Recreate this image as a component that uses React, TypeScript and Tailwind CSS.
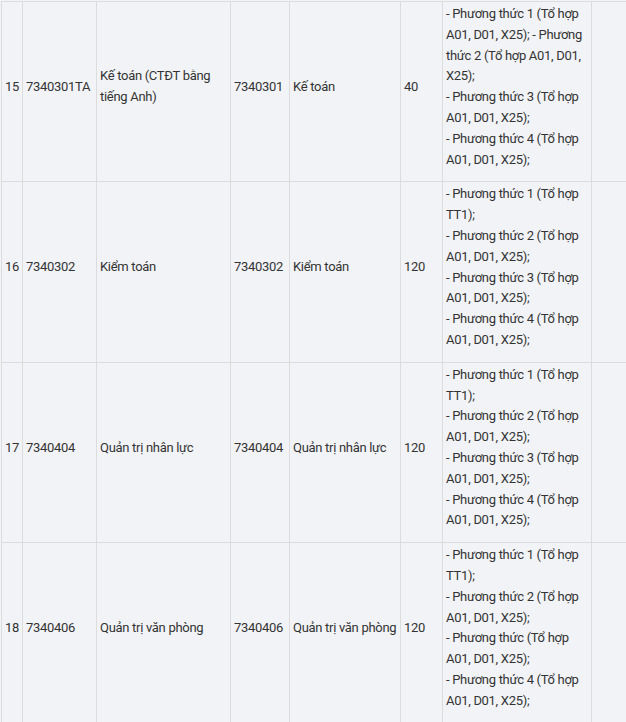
const methodsA = [
  '- Phương thức 1 (Tổ hợp A01, D01, X25); - Phương thức 2 (Tổ hợp A01, D01, X25);',
  '- Phương thức 3 (Tổ hợp A01, D01, X25);',
  '- Phương thức 4 (Tổ hợp A01, D01, X25);',
];

const methodsB = [
  '- Phương thức 1 (Tổ hợp TT1);',
  '- Phương thức 2 (Tổ hợp A01, D01, X25);',
  '- Phương thức 3 (Tổ hợp A01, D01, X25);',
  '- Phương thức 4 (Tổ hợp A01, D01, X25);',
];

const rows = [
  { stt: 15, code: '7340301TA', name: 'Kế toán (CTĐT bằng tiếng Anh)', group: '7340301', groupName: 'Kế toán', quota: 40, methods: methodsA },
  { stt: 16, code: '7340302', name: 'Kiểm toán', group: '7340302', groupName: 'Kiểm toán', quota: 120, methods: methodsB },
  { stt: 17, code: '7340404', name: 'Quản trị nhân lực', group: '7340404', groupName: 'Quản trị nhân lực', quota: 120, methods: methodsB },
  {
    stt: 18,
    code: '7340406',
    name: 'Quản trị văn phòng',
    group: '7340406',
    groupName: 'Quản trị văn phòng',
    quota: 120,
    methods: [
      '- Phương thức 1 (Tổ hợp TT1);',
      '- Phương thức 2 (Tổ hợp A01, D01, X25);',
      '- Phương thức (Tổ hợp A01, D01, X25);',
      '- Phương thức 4 (Tổ hợp A01, D01, X25);',
    ],
  },
];

const td = 'border border-[#dcdcdc] px-[3px] pt-[2px] pb-[11px] align-middle';

export default function App() {
  return (
    <div className="h-[722px] w-[626px] overflow-hidden bg-[#f2f3f7] font-['Roboto','Noto_Sans',sans-serif] text-[13px] leading-[1.6] tracking-[-0.3px] text-[#333]">
      <table className="ml-px mt-px w-[651px] table-fixed border-collapse">
        <colgroup>
          <col className="w-[21px]" />
          <col className="w-[74px]" />
          <col className="w-[134px]" />
          <col className="w-[59px]" />
          <col className="w-[111px]" />
          <col className="w-[42px]" />
          <col className="w-[149px]" />
          <col className="w-[61px]" />
        </colgroup>
        <tbody>
          {rows.map((r) => (
            <tr key={r.stt}>
              <td className={td}>{r.stt}</td>
              <td className={td}>{r.code}</td>
              <td className={td}>{r.name}</td>
              <td className={td}>{r.group}</td>
              <td className={td}>{r.groupName}</td>
              <td className={td}>{r.quota}</td>
              <td className={td}>
                {r.methods.map((m, i) => (
                  <div key={i}>{m}</div>
                ))}
              </td>
              <td className={td}></td>
            </tr>
          ))}
        </tbody>
      </table>
    </div>
  );
}
